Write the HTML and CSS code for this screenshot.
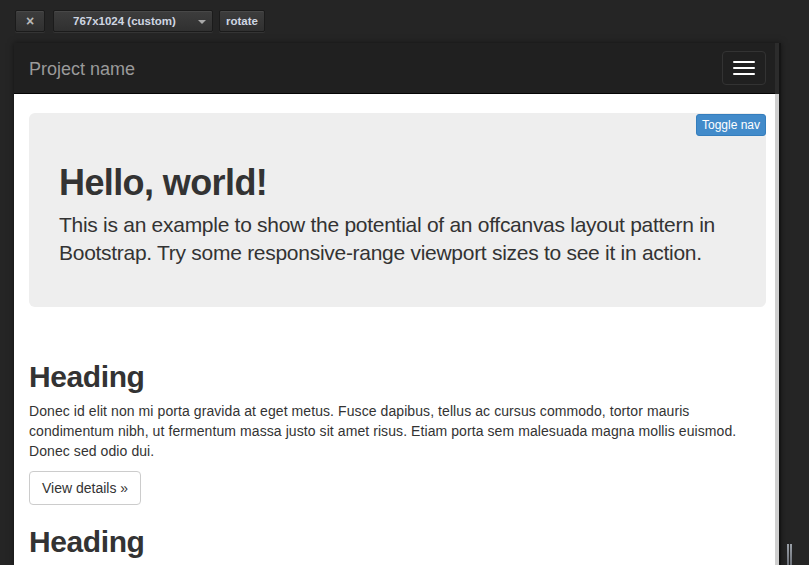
FILE: index.html
```html
<!DOCTYPE html>
<html>
<head>
<meta charset="utf-8">
<link rel="stylesheet" href="styles.css">
</head>
<body>
<div class="toolbar">
  <button class="tb-btn tb-close">&#215;</button>
  <button class="tb-btn tb-select"><span class="tb-label">767x1024 (custom)</span><span class="tb-caret"></span></button>
  <button class="tb-btn tb-rotate">rotate</button>
</div>
<div class="frame">
  <div class="navbar">
    <span class="brand">Project name</span>
    <button class="nav-toggle"><span class="bar"></span><span class="bar"></span><span class="bar"></span></button>
  </div>
  <div class="container">
    <div class="jumbotron">
      <button class="toggle-nav">Toggle nav</button>
      <h1>Hello, world!</h1>
      <p>This is an example to show the potential of an offcanvas layout pattern in Bootstrap. Try some responsive-range viewport sizes to see it in action.</p>
    </div>
    <div class="col">
      <h2>Heading</h2>
      <p>Donec id elit non mi porta gravida at eget metus. Fusce dapibus, tellus ac cursus commodo, tortor mauris condimentum nibh, ut fermentum massa justo sit amet risus. Etiam porta sem malesuada magna mollis euismod. Donec sed odio dui.</p>
      <button class="btn-default">View details &#187;</button>
    </div>
    <div class="col">
      <h2>Heading</h2>
    </div>
  </div>
  <div class="scrollbar"><span class="sb-top"></span><span class="sb-track"></span></div>
</div>
<div class="resize-grip"><span></span><span></span></div>
</body>
</html>
```
FILE: styles.css
```css
* { box-sizing: border-box; }
html, body { height: 100%; }
body {
  margin: 0;
  padding: 10px 0 0 14px;
  background: #252525;
  font-family: "Liberation Sans", Arial, sans-serif;
  overflow: hidden;
  position: relative;
}
.toolbar {
  display: flex;
  align-items: center;
  height: 22px;
  margin-left: 1px;
}
.tb-btn {
  height: 22px;
  margin: 0;
  padding: 0;
  border: 1px solid #1b1b1b;
  border-radius: 2px;
  background: linear-gradient(#3d3d3d, #303030);
  box-shadow: 0 1px 0 rgba(255,255,255,0.07), inset 0 1px 0 rgba(255,255,255,0.06);
  color: #cfd6e2;
  font-family: "Liberation Sans", Arial, sans-serif;
  font-weight: bold;
  font-size: 11.5px;
  display: flex;
  align-items: center;
  justify-content: center;
}
.tb-close { width: 30px; color: #b9b9b9; font-size: 14px; }
.tb-select { width: 160px; margin-left: 8px; position: relative; justify-content: flex-start; padding-left: 19px; }
.tb-caret {
  position: absolute;
  right: 6px;
  top: 9px;
  width: 0; height: 0;
  border-left: 4px solid transparent;
  border-right: 4px solid transparent;
  border-top: 4px solid #a9a9a9;
}
.tb-rotate { width: 46px; margin-left: 6px; }

.frame {
  margin-top: 11px;
  width: 767px;
  height: 522px;
  background: #fff;
  position: relative;
  overflow: hidden;
  box-shadow: 0 0 6px rgba(0,0,0,0.5);
}
.navbar {
  height: 51px;
  background: #202020;
  border-bottom: 1px solid #050505;
  display: flex;
  align-items: flex-start;
  justify-content: space-between;
  padding: 0 15px;
}
.brand {
  color: #9a9a9a;
  font-size: 18px;
  line-height: 20px;
  padding-top: 16px;
}
.nav-toggle {
  margin-top: 8px;
  width: 44px;
  height: 34px;
  background: transparent;
  border: 1px solid #333;
  border-radius: 4px;
  padding: 0 10px;
  display: flex;
  flex-direction: column;
  justify-content: center;
  gap: 4px;
}
.nav-toggle .bar {
  display: block;
  width: 22px;
  height: 2px;
  background: #fff;
  border-radius: 1px;
}
.container { padding: 19px 15px 0; color: #333; }
.jumbotron {
  position: relative;
  background: #eee;
  border-radius: 6px;
  padding: 30px 30px 30px;
  height: 194px;
  margin-bottom: 53px;
}
.toggle-nav {
  position: absolute;
  top: 1px;
  right: 0;
  height: 22px;
  padding: 0 5px;
  background: #428bca;
  border: 1px solid #357ebd;
  border-radius: 3px;
  color: #fff;
  font-family: "Liberation Sans", Arial, sans-serif;
  font-size: 12px;
}
.jumbotron h1 {
  margin: 20px 0 8px;
  font-size: 36px;
  line-height: 40px;
  font-weight: bold;
  letter-spacing: -0.6px;
  color: #333;
}
.jumbotron p {
  margin: 0;
  font-size: 21px;
  line-height: 28px;
  letter-spacing: -0.28px;
  color: #333;
}
.col h2 {
  margin: 20px 0 8px;
  font-size: 30px;
  line-height: 33px;
  font-weight: bold;
  letter-spacing: -0.4px;
}
.col p {
  margin: 0 0 10px;
  font-size: 14px;
  line-height: 20px;
  letter-spacing: 0.08px;
}
.btn-default {
  display: block;
  height: 34px;
  padding: 0 12px;
  background: #fff;
  border: 1px solid #ccc;
  border-radius: 4px;
  color: #333;
  font-family: "Liberation Sans", Arial, sans-serif;
  font-size: 14px;
}
.scrollbar {
  position: absolute;
  top: 0;
  right: 0;
  width: 6px;
  height: 100%;
  display: flex;
  flex-direction: column;
  border-right: 2px solid #151515;
}
.sb-top { height: 51px; background: #2c2c2c; }
.sb-track { flex: 1; background: #cfcfcf; }
.resize-grip {
  position: absolute;
  left: 787px;
  top: 544px;
  display: flex;
  gap: 1px;
}
.resize-grip span {
  width: 2px;
  height: 21px;
  background: linear-gradient(#9aa0a8, #6c7078);
}
```
